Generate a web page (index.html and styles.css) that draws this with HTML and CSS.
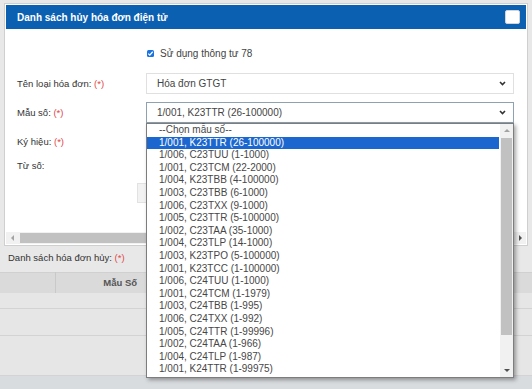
FILE: index.html
```html
<!DOCTYPE html>
<html lang="vi">
<head>
    <meta charset="UTF-8">
    <title>Danh sách hủy hóa đơn điện tử</title>
    <link rel="stylesheet" href="styles.css">
</head>
<body>
    <div class="modal">
        <div class="modal-header">
            <span class="modal-title">Danh sách hủy hóa đơn điện tử</span>
            <span class="btn-close"></span>
        </div>
        <div class="modal-body">
            <div class="form">
                <div class="row-check">
                    <span class="checkbox">
                        <svg width="7" height="7" viewBox="0 0 7 7"><path d="M1.3 3.6l1.5 1.5 2.9-3.3" fill="none" stroke="#fff" stroke-width="1.3"/></svg>
                    </span>
                    <span>Sử dụng thông tư 78</span>
                </div>
                <div class="row">
                    <label class="lbl">Tên loại hóa đơn: <span class="req">(*)</span></label>
                    <div class="select">
                        <span>Hóa đơn GTGT</span>
                        <svg class="chev" width="7" height="5" viewBox="0 0 7 5"><path d="M1 1l2.5 2.5L6 1" fill="none" stroke="#333" stroke-width="1.6"/></svg>
                    </div>
                </div>
                <div class="row">
                    <label class="lbl">Mẫu số: <span class="req">(*)</span></label>
                    <div class="select-wrap">
                        <div class="select select-open">
                            <span>1/001, K23TTR (26-100000)</span>
                            <svg class="chev" width="7" height="5" viewBox="0 0 7 5"><path d="M1 1l2.5 2.5L6 1" fill="none" stroke="#333" stroke-width="1.6"/></svg>
                        </div>
                        <div class="listbox">
                            <ul class="options">
                                <li>--Chọn mẫu số--</li>
                                <li class="active">1/001, K23TTR (26-100000)</li>
                                <li>1/006, C23TUU (1-1000)</li>
                                <li>1/001, C23TCM (22-2000)</li>
                                <li>1/004, K23TBB (4-100000)</li>
                                <li>1/003, C23TBB (6-1000)</li>
                                <li>1/006, C23TXX (9-1000)</li>
                                <li>1/005, C23TTR (5-100000)</li>
                                <li>1/002, C23TAA (35-1000)</li>
                                <li>1/004, C23TLP (14-1000)</li>
                                <li>1/003, K23TPO (5-100000)</li>
                                <li>1/001, K23TCC (1-100000)</li>
                                <li>1/006, C24TUU (1-1000)</li>
                                <li>1/001, C24TCM (1-1979)</li>
                                <li>1/003, C24TBB (1-995)</li>
                                <li>1/006, C24TXX (1-992)</li>
                                <li>1/005, C24TTR (1-99996)</li>
                                <li>1/002, C24TAA (1-966)</li>
                                <li>1/004, C24TLP (1-987)</li>
                                <li>1/001, K24TTR (1-99975)</li>
                            </ul>
                            <div class="vscroll">
                                <span class="sb-btn"><span class="tri tri-up off"></span></span>
                                <span class="sb-thumb"></span>
                                <span class="sb-track"></span>
                                <span class="sb-btn"><span class="tri tri-down"></span></span>
                            </div>
                        </div>
                    </div>
                </div>
                <div class="row row-tight">
                    <label class="lbl">Ký hiệu: <span class="req">(*)</span></label>
                    <div class="input"></div>
                </div>
                <div class="row">
                    <label class="lbl">Từ số:</label>
                    <div class="input"></div>
                </div>
                <div class="row-btn">
                    <span class="btn-ghost"></span>
                </div>
            </div>
            <div class="hscroll">
                <span class="hs-btn"><span class="tri tri-left off"></span></span>
                <span class="hs-thumb"></span>
                <span class="hs-track"></span>
                <span class="hs-btn"><span class="tri tri-right"></span></span>
            </div>
        </div>
    </div>

    <div class="page-content">
        <div class="list-label">Danh sách hóa đơn hủy: <span class="req">(*)</span></div>
        <table class="grid">
            <thead>
                <tr>
                    <th class="col-check"></th>
                    <th class="col-mau">Mẫu Số</th>
                    <th></th>
                </tr>
            </thead>
            <tbody>
                <tr class="r1"><td></td><td></td><td></td></tr>
                <tr class="r2"><td></td><td></td><td></td></tr>
                <tr class="r3"><td></td><td></td><td></td></tr>
            </tbody>
        </table>
        <div class="footer-band"></div>
    </div>
</body>
</html>
```

FILE: styles.css
```css
* {
    box-sizing: border-box;
}
body {
    margin: 0;
    width: 532px;
    height: 389px;
    overflow: hidden;
    background: #e8e8e8;
    font-family: "Liberation Sans", Arial, sans-serif;
    color: #333;
}

/* modal */
.modal {
    margin: 3px 4px 0 4px;
    height: 243px;
    background: #fff;
    border: 1px solid #cfcfcf;
    padding: 1px;
    display: flex;
    flex-direction: column;
}
.modal-header {
    height: 24px;
    background: #0c60b1;
    display: flex;
    align-items: center;
    justify-content: space-between;
    padding: 0 6px 0 11px;
}
.modal-title {
    color: #fff;
    font-size: 10px;
    font-weight: bold;
}
.btn-close {
    width: 15px;
    height: 14px;
    background: #fff;
    border: 1px solid #d4d4d4;
    border-radius: 2px;
}
.modal-body {
    flex: 1;
    display: flex;
    flex-direction: column;
}
.form {
    padding: 17px 12px 0 11px;
}
.row-check {
    height: 14px;
    padding-left: 130px;
    display: flex;
    align-items: center;
    gap: 6px;
    font-size: 10px;
    color: #444;
    margin-bottom: 13px;
}
.checkbox {
    width: 7px;
    height: 7px;
    background: #1a73e0;
    border-radius: 1.5px;
    display: flex;
}
.row {
    display: flex;
    align-items: center;
    height: 21px;
    margin-bottom: 8px;
}
.row-tight {
    margin-bottom: 3px;
}
.lbl {
    width: 129px;
    flex-shrink: 0;
    font-size: 9.5px;
    color: #333;
}
.req {
    color: #e04848;
}
.select,
.input {
    flex: 1;
    height: 21px;
    border: 1px solid #e0e0e0;
    background: #fff;
    display: flex;
    align-items: center;
    justify-content: space-between;
    padding: 0 7px 0 10px;
    font-size: 10px;
    color: #444;
}
.select-wrap {
    flex: 1;
    position: relative;
    height: 21px;
}
.select-open {
    height: 21px;
    border-color: #8ea2b0;
}

/* open dropdown */
.listbox {
    position: absolute;
    top: 100%;
    left: 0;
    right: 0;
    height: 255px;
    background: #fff;
    border: 1px solid #7d7d7d;
    box-shadow: 2px 2px 4px rgba(0, 0, 0, 0.35);
    display: flex;
    z-index: 5;
}
.options {
    list-style: none;
    margin: 0 1px 0 0;
    padding: 0;
    flex: 1;
}
.options li {
    height: 12.6px;
    line-height: 12.6px;
    padding-left: 12px;
    font-size: 10px;
    color: #474747;
    white-space: nowrap;
}
.options li.active {
    background: #1b67cf;
    color: #fff;
}
.vscroll {
    width: 13px;
    display: flex;
    flex-direction: column;
    background: #f1f1f1;
}
.sb-btn {
    height: 13px;
    display: flex;
    align-items: center;
    justify-content: center;
}
.sb-thumb {
    margin-top: 1px;
    height: 197px;
    background: #c1c1c1;
    margin-left: 1px;
    margin-right: 1px;
}
.sb-track {
    flex: 1;
}
.tri {
    width: 0;
    height: 0;
    border-style: solid;
}
.tri-up {
    border-width: 0 3px 3px 3px;
    border-color: transparent transparent #505050 transparent;
}
.tri-down {
    border-width: 3px 3px 0 3px;
    border-color: #505050 transparent transparent transparent;
}
.tri-left {
    border-width: 3px 3px 3px 0;
    border-color: transparent #505050 transparent transparent;
}
.tri-right {
    border-width: 3px 0 3px 3px;
    border-color: transparent transparent transparent #505050;
}
.tri-up.off {
    border-bottom-color: #a3a3a3;
}
.tri-left.off {
    border-right-color: #a3a3a3;
}

.row-btn {
    padding-left: 120px;
    margin-top: -1px;
    height: 20px;
}
.btn-ghost {
    display: block;
    width: 90px;
    height: 20px;
    background: #f2f2f2;
    border: 1px solid #e2e2e2;
}

/* modal horizontal scrollbar */
.hscroll {
    margin-top: auto;
    height: 12px;
    display: flex;
    background: #f1f1f1;
}
.hs-btn {
    width: 12px;
    display: flex;
    align-items: center;
    justify-content: center;
}
.hs-thumb {
    margin: 1px 0 1px 2px;
    width: 420px;
    background: #c1c1c1;
}
.hs-track {
    flex: 1;
}

/* page behind the modal */
.list-label {
    height: 26px;
    line-height: 24px;
    padding-left: 8px;
    font-size: 9.5px;
    color: #333;
}
.grid {
    width: 100%;
    border-collapse: collapse;
    table-layout: fixed;
}
.grid th {
    height: 20px;
    background: #dadada;
    border-top: 1px solid #d0d0d0;
    font-size: 9.5px;
    color: #555;
    font-weight: bold;
    padding: 0;
}
.grid .col-check {
    width: 55px;
    border-right: 1px solid #c9c9c9;
}
.grid .col-mau {
    width: 130px;
    text-align: center;
}
.grid td {
    background: #e6e6e6;
    border-bottom: 1px solid #d3d3d3;
    padding: 0;
}
.grid .r1 td {
    height: 16px;
}
.grid .r2 td {
    height: 27px;
}
.grid .r3 td {
    height: 40px;
}
.footer-band {
    height: 20px;
    background: #d9dcdf;
}
```
